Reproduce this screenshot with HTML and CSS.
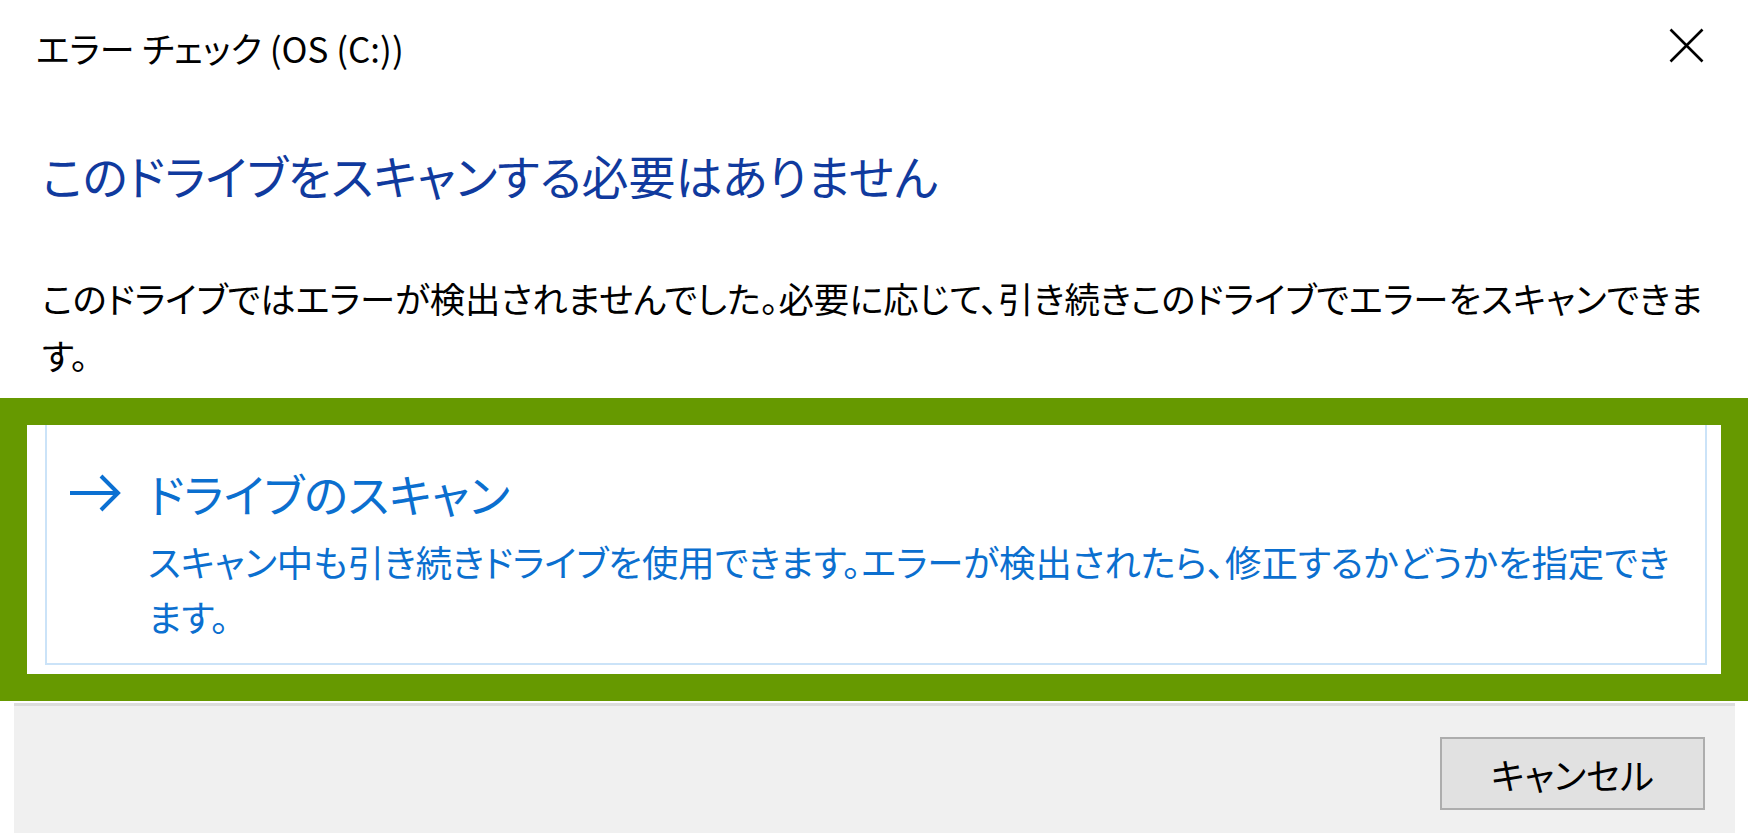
FILE: index.html
```html
<!DOCTYPE html>
<html lang="ja">
<head>
<meta charset="utf-8">
<title>エラー チェック (OS (C:))</title>
<link rel="stylesheet" href="styles.css">
</head>
<body>
<div class="dialog">
  <header class="titlebar">
    <span class="title">エラー チェック (OS (C:))</span>
    <button class="close" aria-label="閉じる">
      <svg width="35" height="35" viewBox="0 0 35 35"><path d="M1.5 1.5 L33.5 33.5 M33.5 1.5 L1.5 33.5" stroke="#000" stroke-width="2.6" fill="none"/></svg>
    </button>
  </header>
  <main class="content">
    <h1 class="instruction">このドライブをスキャンする必要はありません</h1>
    <p class="message">このドライブではエラーが検出されませんでした。必要に応じて、引き続きこのドライブでエラーをスキャンできま<br>す。</p>
  </main>
  <div class="highlight">
    <div class="highlight-inner">
      <div class="command-link">
        <span class="arrow">
          <svg width="54" height="40" viewBox="0 0 54 40"><path d="M2 20 H50 M33 3 L50 20 L33 37" stroke="#0b70d2" stroke-width="4" fill="none" stroke-linejoin="miter"/></svg>
        </span>
        <div class="link-text">
          <div class="link-title">ドライブのスキャン</div>
          <div class="link-desc">スキャン中も引き続きドライブを使用できます。エラーが検出されたら、修正するかどうかを指定でき<br>ます。</div>
        </div>
      </div>
    </div>
  </div>
  <footer class="footer">
    <button class="cancel">キャンセル</button>
  </footer>
</div>
</body>
</html>
```

FILE: styles.css
```css
html, body {
  margin: 0;
  padding: 0;
  background: #ffffff;
}

body {
  font-family: "Noto Sans CJK JP", "Noto Sans", sans-serif;
  font-feature-settings: "palt";
  color: #000;
  width: 1750px;
  height: 833px;
  overflow: hidden;
}

.dialog {
  display: flex;
  flex-direction: column;
  height: 833px;
}

.titlebar {
  height: 96px;
  display: flex;
  align-items: center;
  justify-content: space-between;
  padding: 0 46px 0 36px;
  box-sizing: border-box;
}

.title {
  font-size: 35px;
  line-height: 96px;
  white-space: nowrap;
}

.close {
  border: none;
  background: transparent;
  padding: 0;
  margin-top: -6px;
  display: flex;
}

.content {
  padding-left: 42px;
}

.instruction {
  margin: 44px 0 0 0;
  font-size: 46.9px;
  font-weight: 400;
  line-height: 70px;
  color: #103a9e;
  white-space: nowrap;
}

.message {
  margin: 59px 0 0 0;
  font-size: 35.4px;
  line-height: 57px;
  white-space: nowrap;
}

.highlight {
  margin-top: 15px;
  width: 1748px;
  box-sizing: border-box;
  border: 27px solid #669900;
  background: #ffffff;
}

.highlight-inner {
  height: 249px;
  display: flex;
  align-items: flex-end;
  padding: 0 14px 9px 18px;
  box-sizing: border-box;
}

.command-link {
  flex: 1;
  height: 240px;
  box-sizing: border-box;
  border: 2px solid #cbe3f8;
  border-top: none;
  display: flex;
  padding: 33px 0 0 21px;
  color: #0b6fcf;
}

.arrow {
  height: 70px;
  width: 54px;
  display: flex;
  align-items: center;
  margin-right: 26px;
}

.link-title {
  font-size: 45.7px;
  line-height: 70px;
  white-space: nowrap;
}

.link-desc {
  margin-top: 6px;
  font-size: 36.4px;
  line-height: 55px;
  white-space: nowrap;
}

.footer {
  margin: 2px 0 0 14px;
  width: 1721px;
  flex: 1;
  background: #f0f0f0;
  border-top: 3px solid #dcdcdc;
  box-sizing: border-box;
  display: flex;
  justify-content: flex-end;
  align-items: flex-start;
  padding: 31px 30px 0 0;
}

.cancel {
  width: 265px;
  height: 73px;
  box-sizing: border-box;
  border: 2px solid #adadad;
  background: #e1e1e1;
  font-family: "Noto Sans CJK JP", "Noto Sans", sans-serif;
  font-feature-settings: "palt";
  font-size: 36px;
  color: #000;
  padding: 0;
}
```
